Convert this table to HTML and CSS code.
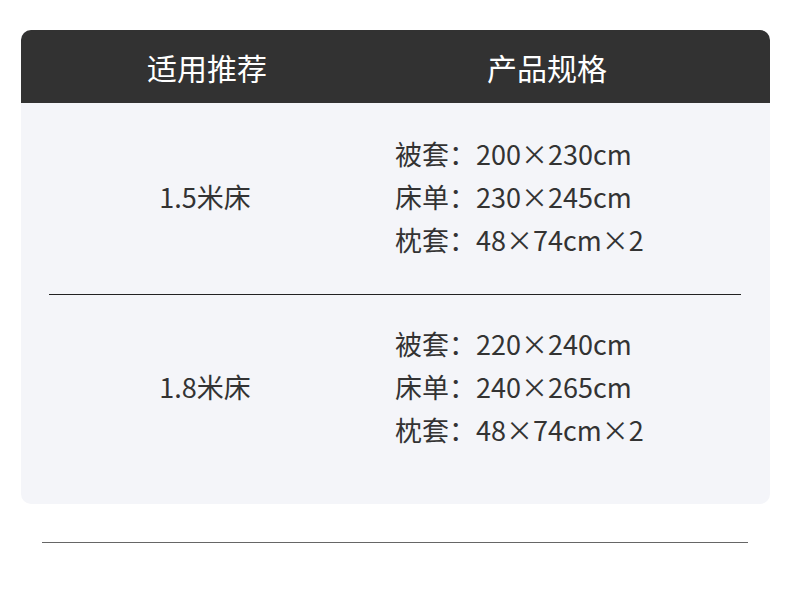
FILE: index.html
```html
<!DOCTYPE html>
<html lang="zh">
<head>
<meta charset="utf-8">
<link rel="stylesheet" href="styles.css">
</head>
<body>
<div class="page">
  <div class="card">
    <div class="head">
      <div class="hcell">适用推荐</div>
      <div class="hcell hright">产品规格</div>
    </div>
    <div class="row">
      <div class="size">1.5米床</div>
      <div class="specs">
        <div class="line">被套：200×230cm</div>
        <div class="line">床单：230×245cm</div>
        <div class="line">枕套：48×74cm×2</div>
      </div>
    </div>
    <div class="sep"></div>
    <div class="row row-last">
      <div class="size">1.8米床</div>
      <div class="specs">
        <div class="line">被套：220×240cm</div>
        <div class="line">床单：240×265cm</div>
        <div class="line">枕套：48×74cm×2</div>
      </div>
    </div>
  </div>
  <div class="bottom-line"></div>
</div>
</body>
</html>
```

FILE: styles.css
```css
html, body {
  margin: 0;
  padding: 0;
  background: #ffffff;
}
.page {
  width: 790px;
  height: 590px;
  padding-top: 30px;
  box-sizing: border-box;
  font-family: "Noto Sans CJK SC", "Noto Sans", sans-serif;
  color: #333333;
}
.card {
  margin-left: 21px;
  width: 749px;
  background: #f4f5f9;
  border-radius: 10px;
  overflow: hidden;
  padding-bottom: 18px;
}
.head {
  display: grid;
  grid-template-columns: 372px 1fr;
  height: 73px;
  background: #323232;
  color: #ffffff;
  font-size: 30px;
}
.hcell {
  display: flex;
  align-items: center;
  justify-content: center;
}
.hright {
  padding-right: 69px;
}
.row {
  display: grid;
  grid-template-columns: 374px 1fr;
  height: 191px;
  box-sizing: border-box;
  padding-bottom: 4px;
  align-items: center;
}
.row-last {
  padding-bottom: 8px;
}
.size {
  text-align: center;
  font-size: 27px;
  padding-right: 6px;
}
.specs {
  font-size: 27px;
  line-height: 43px;
}
.line {
  white-space: nowrap;
}
.sep {
  height: 1px;
  background: #222222;
  margin: 0 29px 0 28px;
}
.bottom-line {
  margin: 38px 42px 0 42px;
  height: 1px;
  background: #666666;
}
```
